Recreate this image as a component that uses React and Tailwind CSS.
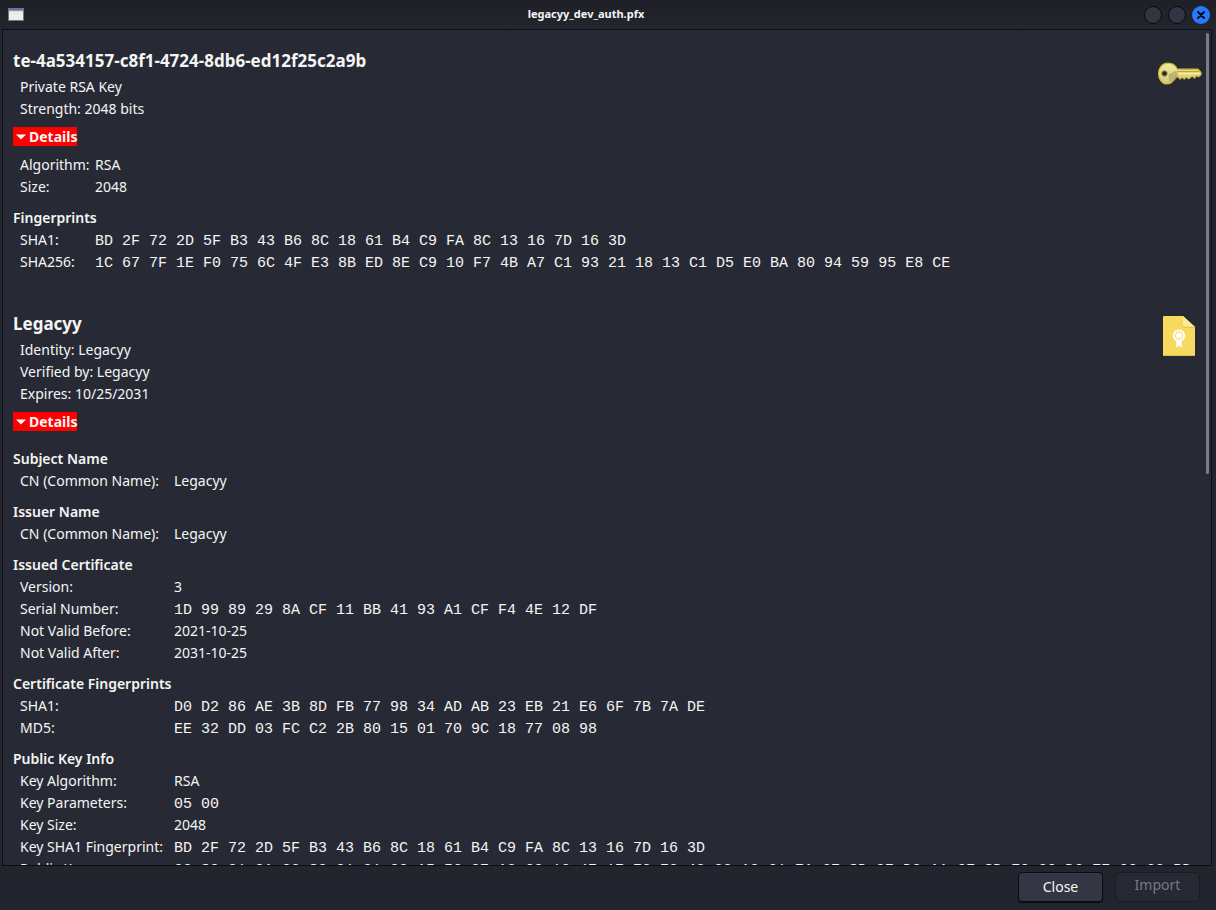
const Hex = ({ children }) => (
  <span className="font-['Liberation_Mono','DejaVu_Sans_Mono',monospace] text-[15px] whitespace-nowrap">{children}</span>
);

function Section({ title, rows, wide, gap = true }) {
  return (
    <section className={gap ? "pt-[9px]" : ""}>
      {title && <h3 className="font-semibold">{title}</h3>}
      <dl className="pl-[7px]">
        {rows.map(([label, value, hex]) => (
          <div key={label} className="flex h-[22px]">
            <dt className={wide ? "w-[154px] shrink-0 whitespace-nowrap" : "w-[75px] shrink-0"}>{label}:</dt>
            <dd className="whitespace-nowrap">{hex ? <Hex>{value}</Hex> : value}</dd>
          </div>
        ))}
      </dl>
    </section>
  );
}

function DetailsToggle() {
  return (
    <button type="button" aria-expanded="true" className="mt-[7px] flex h-[19px] items-center gap-[3px] bg-[#ff0000] pl-[3px] font-bold">
      <svg width="10" height="6" viewBox="0 0 10 6" aria-hidden="true">
        <path d="M0 .5h10L5 5.5z" fill="#fff" />
      </svg>
      Details
    </button>
  );
}

function Summary({ title, lines, icon }) {
  return (
    <header className="flex items-start justify-between">
      <div>
        <h2 className="pb-[2px] text-[17px] leading-[27px] font-bold">{title}</h2>
        <div className="pl-[7px]">
          {lines.map((line) => (
            <p key={line}>{line}</p>
          ))}
        </div>
      </div>
      {icon}
    </header>
  );
}

function KeyIcon() {
  return (
    <svg className="mt-[14px]" width="45" height="26" viewBox="0 0 45 26" role="img" aria-label="Private key">
      <defs>
        <linearGradient id="gold" x1="0" y1="0" x2="0" y2="1">
          <stop offset="0" stopColor="#f2eba4" />
          <stop offset="1" stopColor="#d3c878" />
        </linearGradient>
      </defs>
      <path
        d="M11 2.200c4.200 0 7.600 2.400 9.200 6H41l3 3.300v2.300l-2.500 1.900-2-1.200-2 2.600-2.200-2-2 1.400-1.600 1.200-2.500-1.700-2 2-2-1.900-2 1.900-2.600-2.200h-2.300c-1.300 4.200-4.900 7.200-9.300 7.200C5.500 23 1.500 18.400 1.500 12.500S5.500 2.200 11 2.200z"
        fill="url(#gold)"
        stroke="#d2b834"
        strokeWidth="1.200"
        strokeLinejoin="round"
      />
      <path d="M11.500 13.500 19 9.500l2 5c-1.300 3.600-4 5.700-7 6.500l-2-1.500z" fill="#b3ab66" opacity=".75" />
      <path d="M20 10.600h22" stroke="#c5a51f" strokeWidth="1.300" />
      <path d="M21 12.500h21.500" stroke="#f3eca9" strokeWidth="1.500" />
      <circle cx="7.500" cy="12.500" r="2.700" fill="#23263a" stroke="#9d9140" />
    </svg>
  );
}

function CertificateIcon() {
  return (
    <svg className="mt-[6px] mr-[7px]" width="32" height="40" viewBox="0 0 32 40" role="img" aria-label="Certificate">
      <path d="M1 0h19l12 11v28a1 1 0 0 1-1 1H1a1 1 0 0 1-1-1V1a1 1 0 0 1 1-1z" fill="#f6d95f" />
      <path d="M20 0v10a1 1 0 0 0 1 1h11z" fill="#fae999" />
      <path d="M20 10.500a1 1 0 0 0 1 .8h11M0 39.500h32" stroke="#d4ba50" strokeWidth=".8" fill="none" />
      <path d="M13.300 23v8.800l2.700-2.300 2.700 2.300V23z" fill="#fff" />
      <circle cx="16" cy="19.700" r="5.600" fill="#fff" />
      <circle cx="16" cy="19.700" r="5.700" fill="none" stroke="#fff" strokeWidth="1.200" strokeDasharray="2.200 .8" />
      <circle cx="16" cy="19.700" r="3.700" fill="none" stroke="#f6d95f" strokeWidth="1" />
    </svg>
  );
}

export default function App() {
  return (
    <main className="flex h-screen flex-col overflow-hidden bg-[#23252e] font-['Noto_Sans',sans-serif] text-[14px] leading-[22px] text-[#f5f5f5]">
      <header className="flex h-[29px] shrink-0 items-center bg-linear-to-b from-[#1f1f27] to-[#23262e] pr-[6px] pl-2">
        <svg width="16" height="13" viewBox="0 0 16 13" aria-hidden="true">
          <path d="M.5.5h15v12H.5z" fill="#ecece9" stroke="#77786f" />
          <path d="M1 1h14v2H1z" fill="#5273a8" />
          <path d="M1 3h14" stroke="#bcc9dc" />
        </svg>
        <h1 className="flex-1 pb-[2px] pl-1 text-center text-[11px] font-bold">legacyy_dev_auth.pfx</h1>
        <div className="flex gap-[6px]">
          <button type="button" aria-label="Minimize" className="size-[18px] rounded-full border border-[#08090d] bg-[#333642]" />
          <button type="button" aria-label="Maximize" className="size-[18px] rounded-full border border-[#08090d] bg-[#333642]" />
          <button type="button" aria-label="Close window" className="grid size-[18px] place-items-center rounded-full bg-[#2777ff]">
            <svg width="8" height="8" viewBox="0 0 8 8" aria-hidden="true">
              <path d="m1 1 6 6m0-6L1 7" stroke="#0c0d12" strokeWidth="2" strokeLinecap="round" />
            </svg>
          </button>
        </div>
      </header>

      <div className="mr-1 ml-[2px] flex min-h-0 flex-1 border border-[#0c0e14] bg-[#272a34]">
        <div className="min-w-0 flex-1 overflow-hidden pt-[17px] pr-1 pl-[10px]">
          <article>
            <Summary
              title="te-4a534157-c8f1-4724-8db6-ed12f25c2a9b"
              lines={["Private RSA Key", "Strength: 2048 bits"]}
              icon={<KeyIcon />}
            />
            <DetailsToggle />
            <div className="pt-2">
              <Section gap={false} rows={[["Algorithm", "RSA"], ["Size", "2048"]]} />
              <Section
                title="Fingerprints"
                rows={[
                  ["SHA1", "BD 2F 72 2D 5F B3 43 B6 8C 18 61 B4 C9 FA 8C 13 16 7D 16 3D", true],
                  ["SHA256", "1C 67 7F 1E F0 75 6C 4F E3 8B ED 8E C9 10 F7 4B A7 C1 93 21 18 13 C1 D5 E0 BA 80 94 59 95 E8 CE", true],
                ]}
              />
            </div>
          </article>

          <article className="pt-[37px]">
            <Summary
              title="Legacyy"
              lines={["Identity: Legacyy", "Verified by: Legacyy", "Expires: 10/25/2031"]}
              icon={<CertificateIcon />}
            />
            <DetailsToggle />
            <div className="pt-2">
              <Section wide title="Subject Name" rows={[["CN (Common Name)", "Legacyy"]]} />
              <Section wide title="Issuer Name" rows={[["CN (Common Name)", "Legacyy"]]} />
              <Section
                wide
                title="Issued Certificate"
                rows={[
                  ["Version", "3"],
                  ["Serial Number", "1D 99 89 29 8A CF 11 BB 41 93 A1 CF F4 4E 12 DF", true],
                  ["Not Valid Before", "2021-10-25"],
                  ["Not Valid After", "2031-10-25"],
                ]}
              />
              <Section
                wide
                title="Certificate Fingerprints"
                rows={[
                  ["SHA1", "D0 D2 86 AE 3B 8D FB 77 98 34 AD AB 23 EB 21 E6 6F 7B 7A DE", true],
                  ["MD5", "EE 32 DD 03 FC C2 2B 80 15 01 70 9C 18 77 08 98", true],
                ]}
              />
              <Section
                wide
                title="Public Key Info"
                rows={[
                  ["Key Algorithm", "RSA"],
                  ["Key Parameters", "05 00", true],
                  ["Key Size", "2048"],
                  ["Key SHA1 Fingerprint", "BD 2F 72 2D 5F B3 43 B6 8C 18 61 B4 C9 FA 8C 13 16 7D 16 3D", true],
                  ["Public Key", "30 82 01 0A 02 82 01 01 00 A5 56 07 A2 62 16 47 1E 73 73 42 23 A3 61 7A 6E 8D 97 D2 AA 27 8D 70 00 D6 E7 00 62 BD", true],
                ]}
              />
            </div>
          </article>
        </div>
        <div className="flex w-[5px] shrink-0 flex-col pt-[3px]">
          <div className="h-[53%] w-[3px] rounded-full bg-[#7b7d84]" />
        </div>
      </div>

      <footer className="flex h-11 shrink-0 items-start justify-end gap-3 pt-[6px] pr-4">
        <button type="button" className="h-[30px] w-[85px] rounded-[4px] border border-[#0b0c10] bg-[#343743] shadow-[0_1px_1px_#0b0c10]">Close</button>
        <button type="button" disabled className="h-[30px] w-[85px] rounded-[4px] border border-[#191b22] bg-[#262933] pb-1 text-[#777981]">Import</button>
      </footer>
    </main>
  );
}
